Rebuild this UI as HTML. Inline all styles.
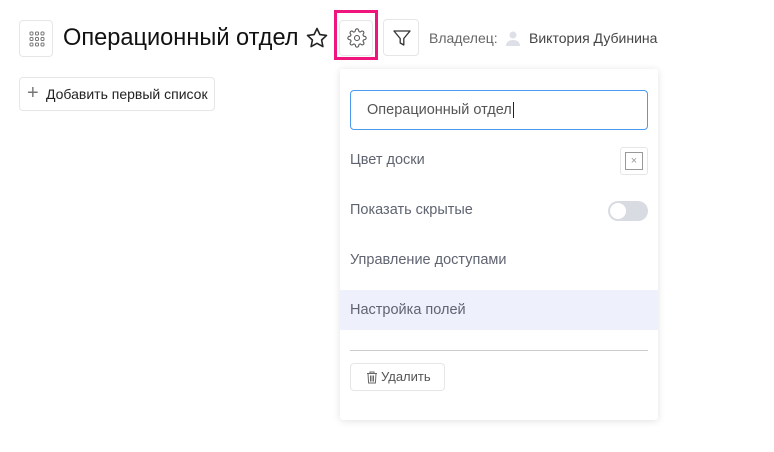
<!DOCTYPE html>
<html><head><meta charset="utf-8"><style>
body{margin:0;width:774px;height:452px;background:#fff;font-family:"Liberation Sans",sans-serif;position:relative;overflow:hidden}
.a{position:absolute}
.btn{position:absolute;border:1px solid #e6e6e6;border-radius:4px;background:#fff;box-sizing:border-box}
.row{position:absolute;left:0;right:0;height:40px;line-height:40px;padding-left:10px;font-size:14.5px;color:#5f6470}
</style></head><body>
<div class="btn" style="left:19px;top:20px;width:34px;height:37px">
<svg class="a" style="left:8px;top:9px" width="18" height="18" viewBox="0 0 18 18" fill="none" stroke="#777" stroke-width="1">
<rect x="2" y="2" width="3" height="3" rx="1"/><rect x="7.5" y="2" width="3" height="3" rx="1"/><rect x="13" y="2" width="3" height="3" rx="1"/>
<rect x="2" y="7.5" width="3" height="3" rx="1"/><rect x="7.5" y="7.5" width="3" height="3" rx="1"/><rect x="13" y="7.5" width="3" height="3" rx="1"/>
<rect x="2" y="13" width="3" height="3" rx="1"/><rect x="7.5" y="13" width="3" height="3" rx="1"/><rect x="13" y="13" width="3" height="3" rx="1"/></svg></div>
<div class="a" style="left:63px;top:23px;font-size:23.6px;color:#111;line-height:30px">Операционный отдел</div>
<svg class="a" style="left:305px;top:26px" width="24" height="24" viewBox="0 0 24 24" fill="none" stroke="#222" stroke-width="1.6" stroke-linejoin="round"><path d="M12 2.5l2.9 6.1 6.6.8-4.9 4.6 1.3 6.6L12 17.3l-5.9 3.3 1.3-6.6-4.9-4.6 6.6-.8z"/></svg>
<div class="a" style="left:334px;top:10px;width:44px;height:50px;border:3px solid #f0157d;box-sizing:border-box"></div>
<div class="btn" style="left:339px;top:20px;width:34px;height:36px">
<svg class="a" style="left:7px;top:7px" width="20" height="20" viewBox="0 0 24 24" fill="none" stroke="#555" stroke-width="1.3"><circle cx="12" cy="12" r="3"/><path d="M19.4 15a1.65 1.65 0 0 0 .33 1.82l.06.06a2 2 0 1 1-2.83 2.83l-.06-.06a1.65 1.65 0 0 0-1.82-.33 1.65 1.65 0 0 0-1 1.51V21a2 2 0 1 1-4 0v-.09A1.650 1.65 0 0 0 9 19.4a1.65 1.65 0 0 0-1.820.33l-.06.06a2 2 0 1 1-2.83-2.83l.06-.06A1.65 1.65 0 0 0 4.68 15a1.65 1.65 0 0 0-1.51-1H3a2 2 0 1 1 0-4h.09A1.65 1.65 0 0 0 4.6 9a1.65 1.65 0 0 0-.33-1.82l-.06-.06a2 2 0 1 1 2.83-2.83l.06.06A1.65 1.65 0 0 0 9 4.68a1.65 1.65 0 0 0 1-1.51V3a2 2 0 1 1 4 0v.09a1.65 1.65 0 0 0 1 1.51 1.65 1.65 0 0 0 1.82-.33l.06-.06a2 2 0 1 1 2.83 2.83l-.06.06A1.65 1.65 0 0 0 19.4 9a1.65 1.65 0 0 0 1.51 1H21a2 2 0 1 1 0 4h-.09a1.65 1.65 0 0 0-1.51 1z"/></svg></div>
<div class="btn" style="left:383px;top:19px;width:36px;height:37px">
<svg class="a" style="left:8px;top:8px" width="20" height="20" viewBox="0 0 20 20" fill="none" stroke="#333" stroke-width="1.3" stroke-linejoin="round"><path d="M2 3h16l-6.2 7.5V17l-3.6-2v-4.5z"/></svg></div>
<div class="a" style="left:429px;top:30px;font-size:14px;color:#666">Владелец:</div>
<svg class="a" style="left:505px;top:30px" width="16" height="16" viewBox="0 0 16 16" fill="#dde0e6"><circle cx="8" cy="5" r="3.5"/><path d="M1 16c0-4 3-6 7-6s7 2 7 6z"/></svg>
<div class="a" style="left:529px;top:30px;font-size:14px;color:#444">Виктория Дубинина</div>
<div class="btn" style="left:19px;top:77px;width:196px;height:34px">
<div class="a" style="left:7px;top:4px;font-size:20px;color:#777;font-weight:300">+</div>
<div class="a" style="left:26px;top:8px;font-size:14px;color:#222">Добавить первый список</div></div>
<div class="a" style="left:340px;top:69px;width:318px;height:351px;background:#fff;border-radius:3px;box-shadow:0 1px 8px rgba(0,0,0,.12)">
<div class="a" style="left:10px;top:21px;width:298px;height:40px;border:1px solid #4c9bf0;border-radius:4px;box-sizing:border-box;font-size:14.5px;color:#555;line-height:38px;padding-left:16px">Операционный отдел<span style="border-left:1px solid #222;margin-left:1px"></span></div>
<div class="row" style="top:71px">Цвет доски</div>
<div class="a" style="left:280px;top:78px;width:28px;height:28px;border:1px solid #e6e6e6;border-radius:3px;box-sizing:border-box"><div class="a" style="left:4px;top:4px;width:18px;height:18px;border:1px solid #999;box-sizing:border-box;font-size:11px;color:#999;text-align:center;line-height:16px">×</div></div>
<div class="row" style="top:121px">Показать скрытые</div>
<div class="a" style="left:268px;top:132px;width:40px;height:20px;border-radius:10px;background:#d9dbe2"><div class="a" style="left:2px;top:2px;width:16px;height:16px;border-radius:50%;background:#fff"></div></div>
<div class="row" style="top:171px">Управление доступами</div>
<div class="row" style="top:221px;background:#eef0fc">Настройка полей</div>
<div class="a" style="left:10px;top:281px;width:298px;height:1px;background:#ccc"></div>
<div class="btn" style="left:10px;top:294px;width:95px;height:28px;font-size:13px;color:#555;line-height:26px;padding-left:30px">Удалить
<svg class="a" style="left:15px;top:7px" width="12" height="13" viewBox="0 0 12 13" fill="none" stroke="#666" stroke-width="1"><path d="M1 2.5h10M4 2.5V1h4v1.5M2 2.5l.6 9.5h6.8L10 2.5M4.5 4.5v6M6 4.5v6M7.5 4.5v6"/></svg></div>
</div>
</body></html>
